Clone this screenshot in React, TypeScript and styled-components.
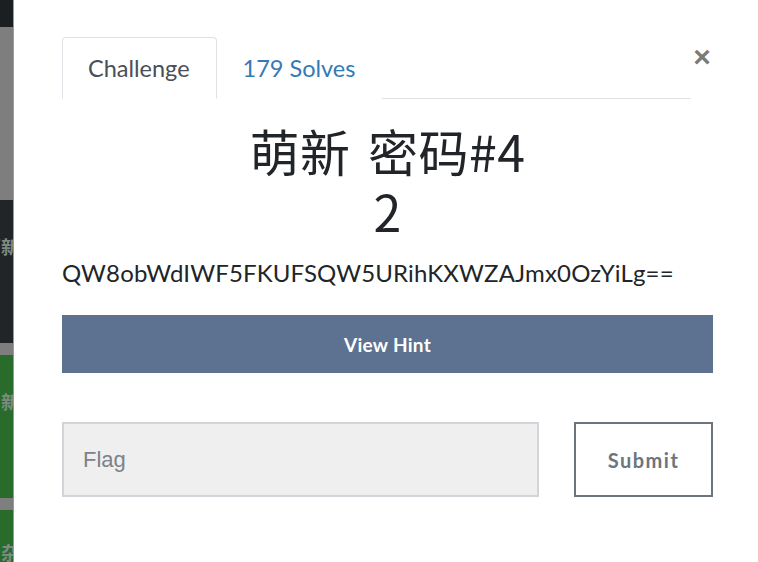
import React from "react";
import styled, { createGlobalStyle } from "styled-components";

const Global = createGlobalStyle`
  html, body { margin: 0; padding: 0; background: #fff; }
  body { font-family: Lato, "Noto Sans CJK SC", sans-serif; }
  * { box-sizing: border-box; }
`;

const Page = styled.div`
  display: flex;
  width: 758px;
  height: 562px;
  overflow: hidden;
`;

const Strip = styled.div`
  width: 14px;
  flex: none;
  display: flex;
  flex-direction: column;
  border-right: 1px solid #9a9a9a;
  overflow: hidden;
`;

const Segment = styled.div<{ $h: number; $bg: string }>`
  height: ${(p) => p.$h}px;
  flex: none;
  background: ${(p) => p.$bg};
  display: flex;
  align-items: center;
  justify-content: flex-end;
  overflow: hidden;
  font-family: "Noto Sans CJK SC", sans-serif;
  font-weight: 700;
  font-size: 18px;
  color: #7d8a7f;
  white-space: nowrap;
`;

const SegText = styled.span<{ $dy: number }>`
  margin-right: -6px;
  transform: translateY(${(p) => p.$dy}px);
`;

const Modal = styled.div`
  flex: 1;
  background: #fff;
  padding: 37px 45px 0 48px;
  display: flex;
  flex-direction: column;
`;

const Header = styled.div`
  display: flex;
  align-items: flex-start;
`;

const Tabs = styled.ul`
  flex: 1;
  display: flex;
  list-style: none;
  margin: 0;
  padding: 0;
  border-bottom: 1px solid #dee2e6;
`;

const Tab = styled.li<{ $active?: boolean }>`
  height: 62px;
  margin-bottom: -1px;
  padding: 0 26px 0 25px;
  display: flex;
  align-items: center;
  font-size: 23.5px;
  color: ${(p) => (p.$active ? "#495057" : "#337ab7")};
  background: #fff;
  border: 1px solid ${(p) => (p.$active ? "#dee2e6" : "transparent")};
  border-bottom-color: ${(p) => (p.$active ? "#fff" : "transparent")};
  border-radius: 4px 4px 0 0;
`;

const Close = styled.button`
  width: 22px;
  margin-top: 8px;
  border: none;
  background: none;
  padding: 0;
  color: #7a7a7a;
  font-family: "Liberation Sans", Arial, sans-serif;
  font-weight: 700;
  font-size: 30px;
  line-height: 24px;
  cursor: pointer;
`;

const Title = styled.h3`
  margin: 21px 0 0;
  text-align: center;
  font-weight: 400;
  font-size: 50px;
  line-height: 60px;
  color: #212529;
  font-family: "Noto Sans CJK SC", sans-serif;
  word-spacing: 6px;
  letter-spacing: 0.5px;
`;

const Description = styled.p`
  margin: 16px 0 0;
  font-size: 24px;
  line-height: 34px;
  letter-spacing: 0.15px;
  color: #212529;
`;

const HintButton = styled.button`
  margin-top: 25px;
  height: 58px;
  width: 100%;
  border: none;
  background: #5c7290;
  color: #fff;
  font-family: Lato, sans-serif;
  font-weight: 700;
  font-size: 19px;
  letter-spacing: 0.3px;
`;

const FlagRow = styled.form`
  margin-top: 49px;
  display: flex;
  gap: 35px;
`;

const FlagInput = styled.input`
  flex: 1;
  height: 75px;
  background: #efefef;
  border: 2px solid #d1d5da;
  padding: 0 19px;
  font-family: "Liberation Sans", Arial, sans-serif;
  font-size: 22px;
  color: #495057;
  &::placeholder { color: #7b8289; }
`;

const SubmitButton = styled.button`
  width: 139px;
  height: 75px;
  background: #fff;
  border: 2px solid #6c757d;
  color: #6c757d;
  font-family: Lato, sans-serif;
  font-weight: 700;
  font-size: 20px;
  letter-spacing: 1.5px;
`;

export default function App() {
  return (
    <>
      <Global />
      <Page>
        <Strip>
          <Segment $h={27} $bg="#1c1f22" />
          <Segment $h={173} $bg="#7e7e7e" />
          <Segment $h={143} $bg="#222528">
            <SegText $dy={-26}>萌新</SegText>
          </Segment>
          <Segment $h={12} $bg="#7e7e7e" />
          <Segment $h={143} $bg="#286b2b">
            <SegText $dy={-26}>新</SegText>
          </Segment>
          <Segment $h={12} $bg="#7e7e7e" />
          <Segment $h={52} $bg="#286b2b">
            <SegText $dy={16}>杂</SegText>
          </Segment>
        </Strip>
        <Modal>
          <Header>
            <Tabs>
              <Tab $active>Challenge</Tab>
              <Tab>179 Solves</Tab>
            </Tabs>
            <Close aria-label="Close">×</Close>
          </Header>
          <Title>
            萌新 密码#4
            <br />2
          </Title>
          <Description>QW8obWdIWF5FKUFSQW5URihKXWZAJmx0OzYiLg==</Description>
          <HintButton type="button">View Hint</HintButton>
          <FlagRow onSubmit={(e) => e.preventDefault()}>
            <FlagInput placeholder="Flag" />
            <SubmitButton type="submit">Submit</SubmitButton>
          </FlagRow>
        </Modal>
      </Page>
    </>
  );
}
